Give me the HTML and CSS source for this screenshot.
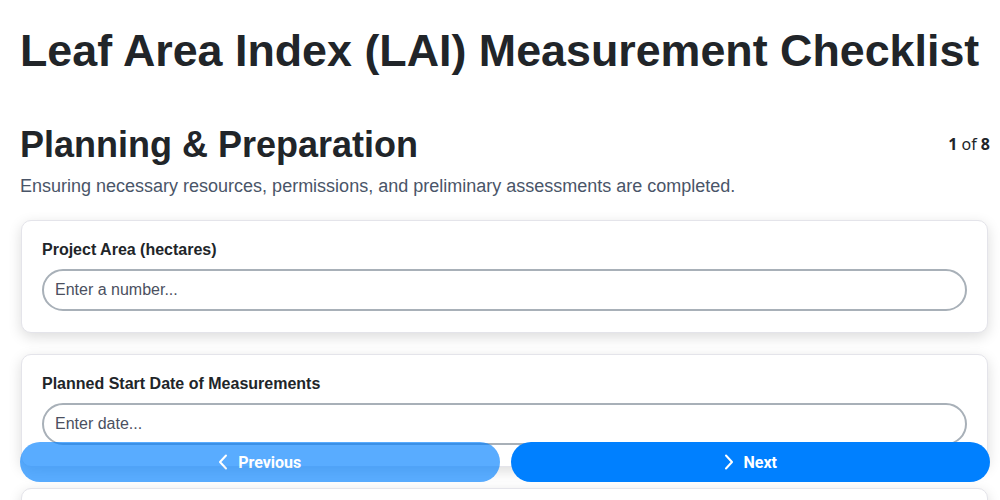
FILE: index.html
```html
<!DOCTYPE html>
<html lang="en">
<head>
    <meta charset="UTF-8">
    <meta name="viewport" content="width=device-width, initial-scale=1.0">
    <title>LAI Measurement Checklist</title>
    <link rel="stylesheet" href="styles.css">
</head>
<body>

<div class="page">
    <h1 class="title">Leaf Area Index (LAI) Measurement Checklist</h1>

    <!-- Section header -->
    <div class="section-head">
        <h2>Planning &amp; Preparation</h2>
        <div class="counter"><b>1</b> of <b>8</b></div>
    </div>
    <p class="section-desc">Ensuring necessary resources, permissions, and preliminary assessments are completed.</p>

    <!-- Questions -->
    <div class="card">
        <label class="field-label" for="area">Project Area (hectares)</label>
        <input class="field-input" id="area" type="text" placeholder="Enter a number...">
    </div>
    <div class="card">
        <label class="field-label" for="start">Planned Start Date of Measurements</label>
        <input class="field-input" id="start" type="text" placeholder="Enter date...">
    </div>
    <div class="card">
        <label class="field-label" for="team">Field Team Lead</label>
        <input class="field-input" id="team" type="text" placeholder="Enter a name...">
    </div>
</div>

<!-- Bottom navigation -->
<div class="nav">
    <button class="nav-btn prev" disabled>
        <svg width="10" height="16" viewBox="0 0 10 16"><path d="M8 1.5 L2 8 L8 14.5" fill="none" stroke="#fff" stroke-width="2" stroke-linecap="round" stroke-linejoin="round"/></svg>
        Previous
    </button>
    <button class="nav-btn next">
        <svg width="10" height="16" viewBox="0 0 10 16"><path d="M2 1.5 L8 8 L2 14.5" fill="none" stroke="#fff" stroke-width="2" stroke-linecap="round" stroke-linejoin="round"/></svg>
        Next
    </button>
</div>

</body>
</html>
```

FILE: styles.css
```css
body {
    margin: 0;
    font-family: "Liberation Sans", Arial, sans-serif;
    color: #212529;
    background-color: #fff;
}
.page {
    padding: 25px 10px 80px 20px;
}
.title {
    font-size: 44.8px;
    font-weight: bold;
    line-height: 1.15;
    white-space: nowrap;
    margin: 0 0 47px;
}
.section-head {
    display: flex;
    justify-content: space-between;
    align-items: center;
}
.section-head h2 {
    font-size: 36px;
    line-height: 1.15;
    margin: 0;
}
.counter {
    font-family: "Noto Sans", sans-serif;
    font-size: 16px;
    color: #212529;
}
.section-desc {
    font-size: 18px;
    color: #4a5568;
    margin: 11px 0 23px;
}
.card {
    background-color: #fff;
    border: 1px solid #e4e4ea;
    border-radius: 10px;
    box-shadow: 0 4px 14px rgba(0, 0, 0, 0.14);
    padding: 20px 20px 21px;
    margin: 0 2px 21px 1px;
}
.field-label {
    display: block;
    font-size: 16px;
    font-weight: bold;
    margin-bottom: 10px;
}
.field-input {
    display: block;
    box-sizing: border-box;
    width: 100%;
    height: 42px;
    padding: 0 11px;
    font-family: "Liberation Sans", Arial, sans-serif;
    font-size: 16px;
    color: #212529;
    border: 2px solid #a8b0b8;
    border-radius: 21px;
    outline: none;
}
.field-input::placeholder {
    color: #4b5060;
}
.nav {
    position: fixed;
    left: 20px;
    right: 10px;
    bottom: 18px;
    display: flex;
    gap: 11px;
}
.nav-btn {
    flex: 1;
    height: 40px;
    display: flex;
    justify-content: center;
    align-items: center;
    gap: 10px;
    background-color: #0080ff;
    color: #fff;
    border: none;
    border-radius: 20px;
    font-family: Roboto, sans-serif;
    font-size: 16px;
    font-weight: bold;
    cursor: pointer;
}
.nav-btn.prev {
    opacity: 0.65;
    cursor: default;
}
```
